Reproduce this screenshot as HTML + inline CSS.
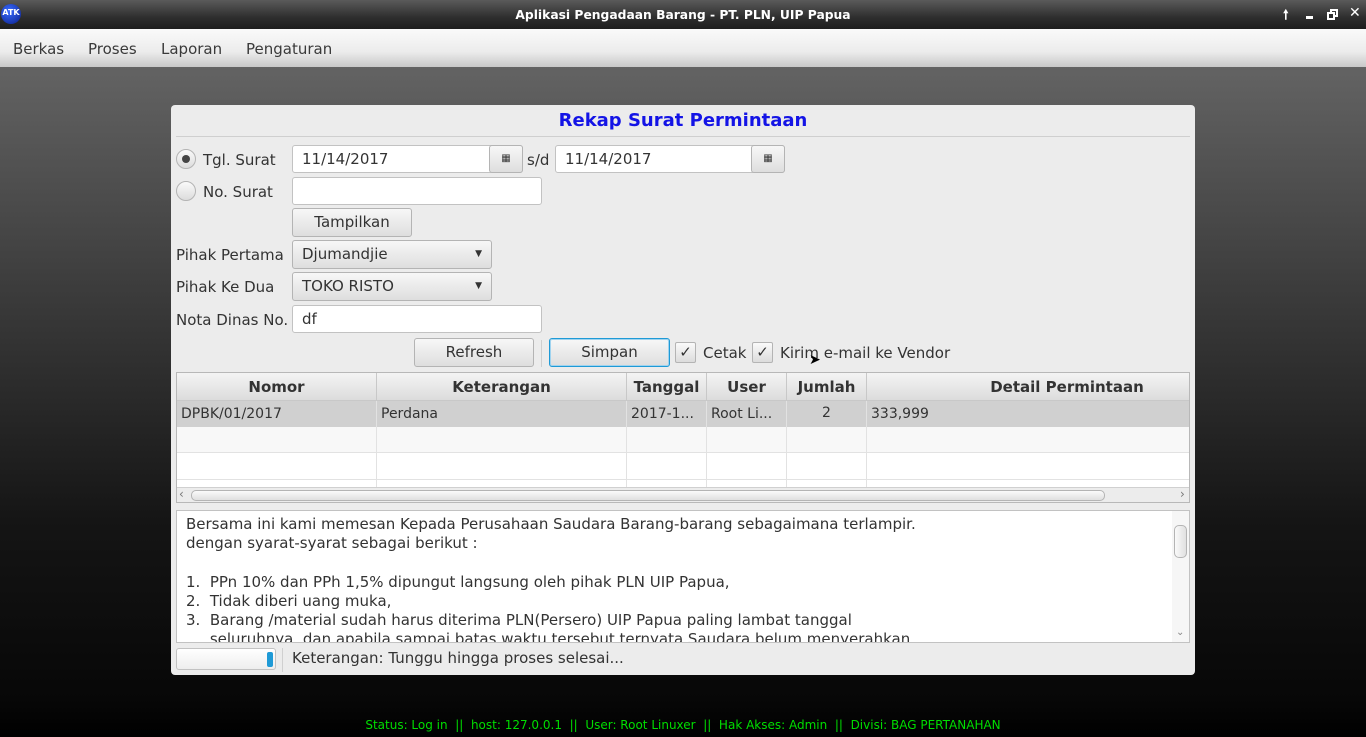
<!DOCTYPE html>
<html><head><meta charset="utf-8"><style>
*{margin:0;padding:0;box-sizing:border-box}
body{width:1366px;height:737px;overflow:hidden;position:relative;font-family:"DejaVu Sans","Liberation Sans",sans-serif;font-size:15px;color:#333;background:linear-gradient(#636363 67px,#3a3a3a 300px,#151515 520px,#070707 700px,#000 737px)}
.a{position:absolute}
.title{left:0;top:0;width:1366px;height:29px;background:linear-gradient(#5a5a5a,#2e2e2e 60%,#1e1e1e);color:#fff;font-size:12.3px;font-weight:bold;text-align:center;line-height:31px}
.menu{left:0;top:29px;width:1366px;height:38px;background:linear-gradient(#fafafa,#ececec 60%,#c8c8c8)}
.menu span{position:absolute;top:11px;color:#3a3a3a}
.panel{left:171px;top:105px;width:1024px;height:570px;background:#ececec;border-radius:4px}
.fld{position:absolute;background:#fff;border:1px solid #c2c2c2;border-radius:3px;padding-left:9px;line-height:25px;color:#333}
.btn{position:absolute;background:linear-gradient(#f7f7f7,#dedede);border:1px solid #b4b4b4;border-radius:3px;text-align:center;line-height:26px}
.lbl{position:absolute}
.radio{position:absolute;width:20px;height:20px;border-radius:50%;border:1px solid #b4b4b4;background:linear-gradient(#fafafa,#dcdcdc)}
.chk{position:absolute;width:21px;height:21px;border:1px solid #b4b4b4;border-radius:2px;background:linear-gradient(#fafafa,#dcdcdc)}
.th{position:absolute;top:0;height:28px;line-height:28px;text-align:center;font-weight:bold;border-right:1px solid #c8c8c8}
.cell{position:absolute;height:26px;line-height:27px;padding-left:4px;border-right:1px solid #e2e2e2;white-space:nowrap}
</style></head><body>
<div class="a title">Aplikasi Pengadaan Barang - PT. PLN, UIP Papua</div>
<div class="a" style="left:1px;top:4px;width:20px;height:20px;border-radius:50%;background:radial-gradient(circle at 40% 35%,#3a6cff,#0a1e8a);color:#fff;font-size:8px;font-weight:bold;line-height:18px;text-align:center">ATK</div>
<div class="a" style="left:1283px;top:6px;color:#fff;font-size:13px;font-weight:bold">🠕</div>
<div class="a" style="left:1306px;top:16px;width:7px;height:3px;background:#fff"></div>
<div class="a" style="left:1330px;top:9px;width:8px;height:8px;border:2px solid #fff"></div>
<div class="a" style="left:1327px;top:12px;width:8px;height:8px;border:2px solid #fff;background:#2e2e2e"></div>
<div class="a" style="left:1349px;top:5px;color:#fff;font-size:14px;font-weight:bold">✕</div>
<div class="a menu"><span style="left:13px">Berkas</span><span style="left:88px">Proses</span><span style="left:161px">Laporan</span><span style="left:246px">Pengaturan</span></div>

<div class="a panel">
<div class="a" style="left:0;top:5px;width:1024px;text-align:center;color:#1414e6;font-weight:bold;font-size:18px">Rekap Surat Permintaan</div>
<div class="a" style="left:5px;top:31px;width:1014px;height:1px;background:#cfcfcf"></div>
<div class="radio" style="left:5px;top:44px"><div class="a" style="left:5px;top:5px;width:8px;height:8px;border-radius:50%;background:#444"></div></div>
<div class="lbl" style="left:32px;top:46px">Tgl. Surat</div>
<div class="radio" style="left:5px;top:76px"></div>
<div class="lbl" style="left:32px;top:78px">No. Surat</div>
<div class="fld" style="left:121px;top:40px;width:231px;height:28px;line-height:26px">11/14/2017</div>
<div class="btn" style="left:318px;top:40px;width:34px;height:28px;font-size:10px">▦</div>
<div class="lbl" style="left:356px;top:46px">s/d</div>
<div class="fld" style="left:384px;top:40px;width:230px;height:28px;line-height:26px">11/14/2017</div>
<div class="btn" style="left:580px;top:40px;width:34px;height:28px;font-size:10px">▦</div>
<div class="fld" style="left:121px;top:72px;width:250px;height:28px"></div>
<div class="btn" style="left:121px;top:103px;width:120px;height:29px;line-height:27px">Tampilkan</div>
<div class="lbl" style="left:5px;top:141px">Pihak Pertama</div>
<div class="btn" style="left:121px;top:135px;width:200px;height:29px;text-align:left;padding-left:9px;line-height:27px">Djumandjie<span style="position:absolute;right:9px;top:0;font-size:9px">▼</span></div>
<div class="lbl" style="left:5px;top:173px">Pihak Ke Dua</div>
<div class="btn" style="left:121px;top:167px;width:200px;height:29px;text-align:left;padding-left:9px;line-height:27px">TOKO RISTO<span style="position:absolute;right:9px;top:0;font-size:9px">▼</span></div>
<div class="lbl" style="left:5px;top:206px">Nota Dinas No.</div>
<div class="fld" style="left:121px;top:200px;width:250px;height:28px;line-height:26px">df</div>
<div class="btn" style="left:243px;top:233px;width:120px;height:29px;line-height:27px">Refresh</div>
<div class="a" style="left:370px;top:235px;width:1px;height:27px;background:#cfcfcf"></div>
<div class="btn" style="left:378px;top:233px;width:121px;height:29px;line-height:27px;border:1px solid #1f9ad6;box-shadow:inset 0 0 0 1px #9fd3ef">Simpan</div>
<div class="chk" style="left:504px;top:237px;text-align:center;line-height:19px;font-size:15px">✓</div>
<div class="lbl" style="left:532px;top:239px">Cetak</div>
<div class="chk" style="left:581px;top:237px;text-align:center;line-height:19px;font-size:15px">✓</div>
<div class="lbl" style="left:609px;top:239px">Kirim e-mail ke Vendor</div>

<div class="a" style="left:5px;top:267px;width:1014px;height:131px;border:1px solid #b8b8b8;background:#fff;overflow:hidden">
<div class="a" style="left:0;top:0;width:1014px;height:28px;background:linear-gradient(#f4f4f4,#dcdcdc);border-bottom:1px solid #c8c8c8">
<div class="th" style="left:0;width:200px">Nomor</div><div class="th" style="left:200px;width:250px">Keterangan</div><div class="th" style="left:450px;width:80px">Tanggal</div><div class="th" style="left:530px;width:80px">User</div><div class="th" style="left:610px;width:80px">Jumlah</div><div class="th" style="left:690px;width:400px;border:0">Detail Permintaan</div></div>
<div class="a" style="left:0;top:28px;width:1014px;height:26px;background:#d0d0d0;font-size:14px">
<div class="cell" style="left:0;width:200px">DPBK/01/2017</div><div class="cell" style="left:200px;width:250px">Perdana</div><div class="cell" style="left:450px;width:80px">2017-1...</div><div class="cell" style="left:530px;width:80px">Root Li...</div><div class="cell" style="left:610px;width:80px;text-align:center;padding:0;line-height:25px">2</div><div class="cell" style="left:690px;width:323px">333,999</div></div>
<div class="a" style="left:0;top:54px;width:1014px;height:26px;background:#f8f8f8;border-bottom:1px solid #e2e2e2"></div>
<div class="a" style="left:0;top:106px;width:1014px;height:1px;background:#e2e2e2"></div>
<div class="a" style="left:199px;top:54px;width:1px;height:61px;background:#e2e2e2"></div>
<div class="a" style="left:449px;top:54px;width:1px;height:61px;background:#e2e2e2"></div>
<div class="a" style="left:529px;top:54px;width:1px;height:61px;background:#e2e2e2"></div>
<div class="a" style="left:609px;top:54px;width:1px;height:61px;background:#e2e2e2"></div>
<div class="a" style="left:689px;top:54px;width:1px;height:61px;background:#e2e2e2"></div>
<div class="a" style="left:0;top:114px;width:1014px;height:16px;background:#ececec;border-top:1px solid #d0d0d0">
<div class="a" style="left:14px;top:2px;width:914px;height:11px;border:1px solid #b4b4b4;border-radius:5px;background:linear-gradient(#fafafa,#e0e0e0)"></div>
<div class="a" style="left:2px;top:-1px;font-size:12px;color:#777">‹</div><div class="a" style="left:1003px;top:-1px;font-size:12px;color:#777">›</div></div>
</div>

<div class="a" style="left:5px;top:405px;width:1014px;height:133px;border:1px solid #c2c2c2;background:#fff;overflow:hidden;line-height:19.2px;padding:4px 0 0 9px;white-space:pre">Bersama ini kami memesan Kepada Perusahaan Saudara Barang-barang sebagaimana terlampir.
dengan syarat-syarat sebagai berikut :

1.  PPn 10% dan PPh 1,5% dipungut langsung oleh pihak PLN UIP Papua,
2.  Tidak diberi uang muka,
3.  Barang /material sudah harus diterima PLN(Persero) UIP Papua paling lambat tanggal
     seluruhnya, dan apabila sampai batas waktu tersebut ternyata Saudara belum menyerahkan
<div class="a" style="left:995px;top:0;width:18px;height:133px;background:#f6f6f6"><div class="a" style="left:2px;top:14px;width:13px;height:33px;border:1px solid #b4b4b4;border-radius:5px;background:linear-gradient(90deg,#fafafa,#e0e0e0)"></div><div class="a" style="left:4px;top:112px;font-size:10px;color:#888">⌄</div></div>
</div>
<div class="a" style="left:5px;top:543px;width:100px;height:22px;border:1px solid #c2c2c2;border-radius:3px;background:linear-gradient(#fff,#eee)"><div class="a" style="left:90px;top:3px;width:6px;height:15px;border-radius:2px;background:#1f9ad6"></div></div>
<div class="a" style="left:111px;top:543px;width:1px;height:24px;background:#d0d0d0"></div>
<div class="lbl" style="left:121px;top:544px">Keterangan: Tunggu hingga proses selesai...</div>
</div>
<div class="a" style="left:809px;top:352px;font-size:14px;color:#000">➤</div>
<div class="a" style="left:0;top:718px;width:1366px;text-align:center;color:#00dd00;font-size:12px">Status: Log in&nbsp; ||&nbsp; host: 127.0.0.1&nbsp; ||&nbsp; User: Root Linuxer&nbsp; ||&nbsp; Hak Akses: Admin&nbsp; ||&nbsp; Divisi: BAG PERTANAHAN</div>
</body></html>
